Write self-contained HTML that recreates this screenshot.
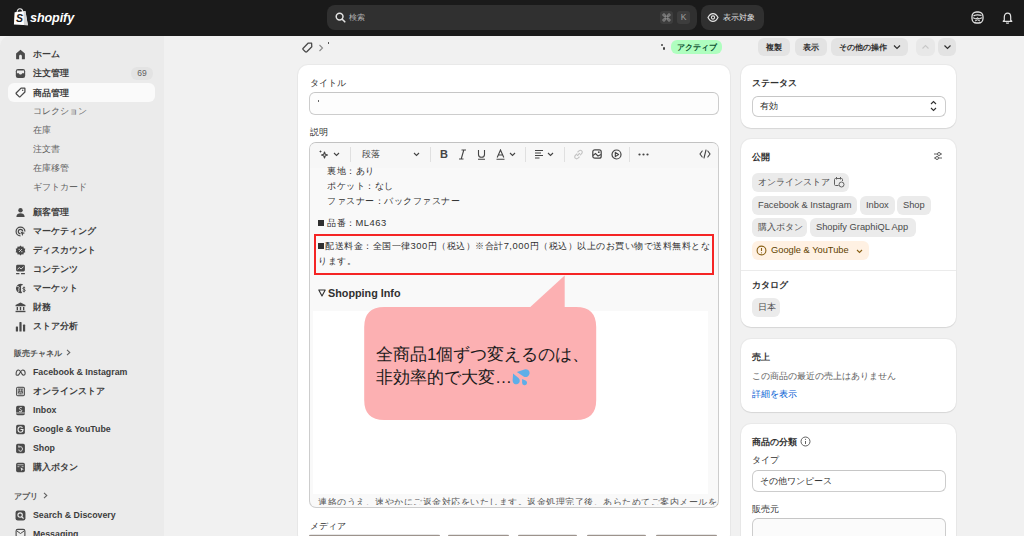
<!DOCTYPE html>
<html><head><meta charset="utf-8">
<style>
*{box-sizing:border-box;margin:0;padding:0}
html,body{width:1024px;height:536px;overflow:hidden;background:#f1f1f1;font-family:"Liberation Sans",sans-serif;color:#303030}
.abs{position:absolute}
#top{position:absolute;left:0;top:0;width:1024px;height:36px;background:#1a1a1a}
#side{position:absolute;left:0;top:36px;width:164px;height:500px;background:#ebebeb;border-top-left-radius:10px}
.nav{position:absolute;left:33px;font-size:8.8px;font-weight:bold;color:#3d3d3d;white-space:nowrap;line-height:12px}
.sub{font-weight:normal;color:#616161}
.sec{position:absolute;left:14px;font-size:8.4px;font-weight:bold;color:#555;white-space:nowrap;line-height:12px}
.ico{position:absolute;left:15px;width:11px;height:11px}
.card{position:absolute;background:#fff;border-radius:10px;box-shadow:0 1px 1px rgba(0,0,0,.08),0 0 0 1px rgba(0,0,0,.03)}
.lbl{position:absolute;font-size:10px;white-space:nowrap;line-height:12px;color:#303030}
.b{font-weight:bold}
.inp{position:absolute;border:1.2px solid #cdcdcd;border-top-color:#c6c6c6;border-radius:6px;background:#fdfdfd}
.chip{position:absolute;height:19px;background:#ebebeb;border-radius:6px;font-size:9.3px;line-height:19px;color:#4a4a4a;padding:0 6px;white-space:nowrap}
.btn{position:absolute;height:18px;background:#e3e3e3;border-radius:6px;font-size:8.4px;font-weight:bold;line-height:18px;color:#303030;text-align:center;white-space:nowrap}
.et{position:absolute;font-size:9.4px;line-height:12px;color:#303030;white-space:nowrap;letter-spacing:.5px}
</style></head><body>
<div id="top">
<!-- logo -->
<svg class="abs" style="left:13px;top:8px" width="16" height="18" viewBox="0 0 16 18"><path d="M4 4.2 C4.3 2 5.5 .8 7 .8 C8.5 .8 9.6 2 9.9 3.8" stroke="#e8e8e8" stroke-width="1.1" fill="none"/><path d="M1.6 4.3 L12.4 3.1 L14.9 17.2 L0.9 16.6 Z" fill="#fff"/><path d="M10.6 3.3 L12.4 3.1 L14.9 17.2 L10.9 17.1 Z" fill="#d4d4d4"/><text x="3" y="14" font-family="Liberation Sans" font-weight="bold" font-style="italic" font-size="10.5" fill="#1a1a1a">S</text></svg>
<div class="abs" style="left:30px;top:9px;font-size:12.6px;font-weight:bold;font-style:italic;color:#fff;letter-spacing:-.1px;line-height:18px">shopify</div>
<!-- search -->
<div class="abs" style="left:327px;top:5px;width:370px;height:25px;background:#303030;border-radius:8px"></div>
<svg class="abs" style="left:335px;top:12px" width="11" height="11" viewBox="0 0 11 11"><circle cx="4.6" cy="4.6" r="3.4" stroke="#e3e3e3" stroke-width="1.5" fill="none"/><path d="M7.2 7.2 L9.8 9.8" stroke="#e3e3e3" stroke-width="1.6" stroke-linecap="round"/></svg>
<div class="abs" style="left:349px;top:12px;font-size:8.4px;line-height:11px;color:#b5b5b5">検索</div>
<div class="abs" style="left:660px;top:11px;width:13px;height:13px;background:#3d3d3d;border-radius:3px;color:#a0a0a0;font-size:8px;line-height:13px;text-align:center"><svg width="9" height="9" viewBox="0 0 10 10" style="margin-top:2px"><path d="M3.5 3.5 H6.5 V6.5 H3.5 Z M3.5 3.5 V2.2 A1.3 1.3 0 1 0 2.2 3.5 H3.5 M6.5 3.5 V2.2 A1.3 1.3 0 1 1 7.8 3.5 H6.5 M6.5 6.5 V7.8 A1.3 1.3 0 1 0 7.8 6.5 H6.5 M3.5 6.5 V7.8 A1.3 1.3 0 1 1 2.2 6.5 H3.5" stroke="#a0a0a0" stroke-width=".9" fill="none"/></svg></div>
<div class="abs" style="left:677px;top:11px;width:13px;height:13px;background:#3d3d3d;border-radius:3px;color:#a0a0a0;font-size:8.5px;line-height:13px;text-align:center">K</div>
<div class="abs" style="left:701px;top:5px;width:63px;height:25px;background:#303030;border-radius:8px"></div>
<svg class="abs" style="left:707px;top:12px" width="12" height="11" viewBox="0 0 12 11"><path d="M1 5.5 C2.5 2.5 4 1.6 6 1.6 C8 1.6 9.5 2.5 11 5.5 C9.5 8.5 8 9.4 6 9.4 C4 9.4 2.5 8.5 1 5.5 Z" stroke="#e3e3e3" stroke-width="1.2" fill="none"/><circle cx="6" cy="5.5" r="1.6" stroke="#e3e3e3" stroke-width="1.1" fill="none"/></svg>
<div class="abs" style="left:723px;top:12px;font-size:8.4px;line-height:11px;color:#e3e3e3">表示対象</div>
<!-- right icons -->
<svg class="abs" style="left:971px;top:11px" width="13" height="13" viewBox="0 0 13 13"><rect x="1" y="1" width="11" height="11" rx="4.5" stroke="#e3e3e3" stroke-width="1.3" fill="none"/><path d="M2.5 5 C4 3.5 8 3.5 10.5 4.5" stroke="#e3e3e3" stroke-width="1.2" fill="none"/><path d="M2 6.8 L5 8 L6.5 7 L8 8 L11 6.8" stroke="#e3e3e3" stroke-width="1.1" fill="none"/><path d="M4 10 L6.5 8.8 L9 10" stroke="#e3e3e3" stroke-width="1" fill="none"/></svg>
<svg class="abs" style="left:1002px;top:12px" width="11" height="12" viewBox="0 0 11 12"><path d="M2.3 8.3 L2.3 5 C2.3 2.6 3.8 1.2 5.5 1.2 C7.2 1.2 8.7 2.6 8.7 5 L8.7 8.3 L9.8 9.3 L1.2 9.3 Z" stroke="#e3e3e3" stroke-width="1.2" fill="none" stroke-linejoin="round"/><path d="M4.3 10.6 C4.8 11.4 6.2 11.4 6.7 10.6" stroke="#e3e3e3" stroke-width="1.1" fill="none"/></svg>
</div>
<div id="side">
</div>
<!-- sidebar items (page coords) -->
<div class="abs" style="left:8px;top:83px;width:147px;height:19px;background:#fafafa;border-radius:6px"></div>

<svg class="abs" style="left:15px;top:48.5px" width="11" height="11" viewBox="0 0 20 20"><path d="M10 1.5 L18 8 V17.5 C18 18.1 17.6 18.5 17 18.5 H12.5 V13 C12.5 11.6 11.4 10.5 10 10.5 C8.6 10.5 7.5 11.6 7.5 13 V18.5 H3 C2.4 18.5 2 18.1 2 17.5 V8 Z" fill="#4a4a4a"/></svg>
<svg class="abs" style="left:15px;top:68.0px" width="11" height="11" viewBox="0 0 20 20"><rect x="1.5" y="2" width="17" height="16" rx="4" fill="#4a4a4a"/><path d="M3.5 4.5 H16.5 V9.5 H13 C12.5 11 11.4 12 10 12 C8.6 12 7.5 11 7 9.5 H3.5 Z" fill="#ebebeb"/></svg>
<svg class="abs" style="left:15px;top:87.0px" width="11" height="11" viewBox="0 0 20 20"><path d="M11 2 H17.5 C17.8 2 18 2.2 18 2.5 V9 L9.5 17.5 C8.9 18.1 8 18.1 7.4 17.5 L2.5 12.6 C1.9 12 1.9 11.1 2.5 10.5 Z" stroke="#4a4a4a" stroke-width="2.3" fill="none" stroke-linejoin="round"/><circle cx="14" cy="6" r="1.4" fill="#4a4a4a"/></svg>
<svg class="abs" style="left:15px;top:206.5px" width="11" height="11" viewBox="0 0 20 20"><circle cx="10" cy="6" r="4" fill="#4a4a4a"/><path d="M2.5 18 C2.5 13.5 6 11.5 10 11.5 C14 11.5 17.5 13.5 17.5 18 Z" fill="#4a4a4a"/></svg>
<svg class="abs" style="left:15px;top:225.5px" width="11" height="11" viewBox="0 0 20 20"><path d="M10 18 A8 8 0 1 1 18 10" stroke="#4a4a4a" stroke-width="2.2" fill="none"/><path d="M10 14 A4 4 0 1 1 14 10" stroke="#4a4a4a" stroke-width="2.2" fill="none"/><path d="M10 10 L18.5 12.5 L15 14 L13.5 18 Z" fill="#4a4a4a"/></svg>
<svg class="abs" style="left:15px;top:244.5px" width="11" height="11" viewBox="0 0 20 20"><path d="M10 1 L12.3 3 L15.3 2.8 L16 5.7 L18.8 7 L17.8 10 L18.8 13 L16 14.3 L15.3 17.2 L12.3 17 L10 19 L7.7 17 L4.7 17.2 L4 14.3 L1.2 13 L2.2 10 L1.2 7 L4 5.7 L4.7 2.8 L7.7 3 Z" fill="#4a4a4a"/><path d="M7.5 12.5 L12.5 7.5" stroke="#ebebeb" stroke-width="1.6"/><circle cx="7.5" cy="7.8" r="1.1" fill="#ebebeb"/><circle cx="12.5" cy="12.2" r="1.1" fill="#ebebeb"/></svg>
<svg class="abs" style="left:15px;top:263.5px" width="11" height="11" viewBox="0 0 20 20"><rect x="2" y="1.5" width="16" height="12" rx="2.5" fill="#4a4a4a"/><path d="M4.5 9.5 L8 6.5 L11 9 L15.5 5" stroke="#ebebeb" stroke-width="1.6" fill="none"/><path d="M2 17.5 H8 M11 17.5 H18" stroke="#4a4a4a" stroke-width="2"/></svg>
<svg class="abs" style="left:15px;top:282.5px" width="11" height="11" viewBox="0 0 20 20"><path d="M10 1.5 A8.5 8.5 0 1 0 12.5 18.2 L12.5 16 C11 16 11 13.5 11 12.5 L11 6.5 C11 5 12 4.5 13 4.3 L15 3.2 A8.5 8.5 0 0 0 10 1.5 Z" fill="#4a4a4a"/><path d="M3 6 C5 6.5 6.5 6 7.5 7.5 C8.5 9 6 10.5 7 13 C7.5 14.5 6.5 16 5.5 17" stroke="#ebebeb" stroke-width="1.6" fill="none"/><path d="M18.5 8.8 C17.5 7.8 14.2 7.8 14.2 9.8 C14.2 11.8 18.6 11.3 18.6 13.6 C18.6 15.6 15.5 15.8 14 14.6 M16.4 6.5 V17" stroke="#4a4a4a" stroke-width="1.7" fill="none"/></svg>
<svg class="abs" style="left:15px;top:301.5px" width="11" height="11" viewBox="0 0 20 20"><path d="M10 1 L19 5.5 V7.5 H1 V5.5 Z" fill="#4a4a4a"/><rect x="3" y="9" width="2.5" height="6" fill="#4a4a4a"/><rect x="8.75" y="9" width="2.5" height="6" fill="#4a4a4a"/><rect x="14.5" y="9" width="2.5" height="6" fill="#4a4a4a"/><rect x="1" y="16" width="18" height="2.5" fill="#4a4a4a"/></svg>
<svg class="abs" style="left:15px;top:320.5px" width="11" height="11" viewBox="0 0 20 20"><rect x="1.5" y="10" width="4" height="9" rx="1" fill="#4a4a4a"/><rect x="8" y="2" width="4" height="17" rx="1" fill="#4a4a4a"/><rect x="14.5" y="6.5" width="4" height="12.5" rx="1" fill="#4a4a4a"/></svg>
<svg class="abs" style="left:15px;top:366.5px" width="11" height="11" viewBox="0 0 20 20"><path d="M2 13 C2 9 4 5.5 6.5 5.5 C9 5.5 11 10 12.5 12.5 C13.8 14.5 15 15 16 15 C17.5 15 18.5 13.5 18.5 11.5 C18.5 8.5 16.8 5.5 14 5.5 C11 5.5 8.5 12 7 13.8 C6 15 5 15 4 15 C2.8 15 2 14.2 2 13 Z" stroke="#4a4a4a" stroke-width="2" fill="none"/></svg>
<svg class="abs" style="left:15px;top:385.5px" width="11" height="11" viewBox="0 0 20 20"><rect x="2" y="1.5" width="16" height="17" rx="3" fill="#4a4a4a"/><rect x="4.5" y="4" width="11" height="12" fill="none" stroke="#ebebeb" stroke-width="1.3"/><path d="M7 6 V10 M10 6 V10 M13 6 V10 M7 16 V12.5 H13 V16" stroke="#ebebeb" stroke-width="1.3" fill="none"/></svg>
<svg class="abs" style="left:15px;top:404.5px" width="11" height="11" viewBox="0 0 20 20"><rect x="2" y="1.5" width="16" height="17" rx="3" fill="#4a4a4a"/><path d="M12.5 5 C11.5 4.3 8 4 8 6.5 C8 8.8 12.5 8.5 12.5 10.5 C12.5 12.8 9 12.5 7.5 11.5" stroke="#ebebeb" stroke-width="1.7" fill="none"/><path d="M2 14.5 H18" stroke="#ebebeb" stroke-width="1.5"/></svg>
<svg class="abs" style="left:15px;top:423.5px" width="11" height="11" viewBox="0 0 20 20"><rect x="2" y="1.5" width="16" height="17" rx="3" fill="#4a4a4a"/><path d="M13.5 7 C12.8 5.8 11.5 5 10 5 C7.5 5 5.5 7.2 5.5 10 C5.5 12.8 7.5 15 10 15 C12.5 15 14.5 13 14.5 10 H10" stroke="#ebebeb" stroke-width="2" fill="none"/></svg>
<svg class="abs" style="left:15px;top:442.5px" width="11" height="11" viewBox="0 0 20 20"><rect x="2" y="1.5" width="16" height="17" rx="3" fill="#4a4a4a"/><path d="M7 4.5 V8 C7.5 7.2 8.5 6.8 10 6.8 C12.3 6.8 13.5 8.5 13.5 10.8 C13.5 13.2 12 15 10 15 C8.2 15 7 13.8 7 12" stroke="#ebebeb" stroke-width="1.8" fill="none"/></svg>
<svg class="abs" style="left:15px;top:461.5px" width="11" height="11" viewBox="0 0 20 20"><rect x="2" y="1.5" width="16" height="17" rx="3" fill="#4a4a4a"/><path d="M4.5 5 H15.5 M4.5 8.5 H8 M12 8.5 H15.5" stroke="#ebebeb" stroke-width="1.3"/><path d="M10 10 L16 13 L13 14 L12 17 Z" fill="#ebebeb"/></svg>
<svg class="abs" style="left:15px;top:509.5px" width="11" height="11" viewBox="0 0 20 20"><rect x="1" y="1" width="18" height="18" rx="4" fill="#4a4a4a"/><circle cx="9.3" cy="9.3" r="4" stroke="#ebebeb" stroke-width="2" fill="none"/><path d="M12.3 12.3 L15 15" stroke="#ebebeb" stroke-width="2" stroke-linecap="round"/></svg>
<svg class="abs" style="left:15px;top:528.0px" width="11" height="11" viewBox="0 0 20 20"><rect x="2" y="2.5" width="16" height="14" rx="3" stroke="#4a4a4a" stroke-width="2" fill="none"/><path d="M3.5 5.5 L10 10 L16.5 5.5" stroke="#4a4a4a" stroke-width="1.8" fill="none"/></svg>

<div class="abs" style="left:131px;top:67px;width:22px;height:13px;background:#e3e3e3;border-radius:6px;font-size:8.5px;line-height:13px;text-align:center;color:#616161">69</div>
<div class="nav" style="top:48px">ホーム</div>
<div class="nav" style="top:67px">注文管理</div>
<div class="nav" style="top:86.5px">商品管理</div>
<div class="nav sub" style="top:105px">コレクション</div>
<div class="nav sub" style="top:124px">在庫</div>
<div class="nav sub" style="top:143px">注文書</div>
<div class="nav sub" style="top:162px">在庫移管</div>
<div class="nav sub" style="top:181px">ギフトカード</div>
<div class="nav" style="top:206px">顧客管理</div>
<div class="nav" style="top:225px">マーケティング</div>
<div class="nav" style="top:244px">ディスカウント</div>
<div class="nav" style="top:263px">コンテンツ</div>
<div class="nav" style="top:282px">マーケット</div>
<div class="nav" style="top:301px">財務</div>
<div class="nav" style="top:320px">ストア分析</div>
<div class="nav" style="top:366px">Facebook &amp; Instagram</div>
<div class="nav" style="top:384.5px">オンラインストア</div>
<div class="nav" style="top:403.5px">Inbox</div>
<div class="nav" style="top:422.5px">Google &amp; YouTube</div>
<div class="nav" style="top:441.5px">Shop</div>
<div class="nav" style="top:460.5px">購入ボタン</div>
<div class="nav" style="top:509px">Search &amp; Discovery</div>
<div class="nav" style="top:528px">Messaging</div>
<div class="sec" style="top:346.5px">販売チャネル</div><svg class="abs" style="left:66px;top:349px" width="5" height="7" viewBox="0 0 5 7"><path d="M1 .8 L3.8 3.5 L1 6.2" stroke="#616161" stroke-width="1.1" fill="none"/></svg>
<div class="sec" style="top:489.5px">アプリ</div><svg class="abs" style="left:42.5px;top:492px" width="5" height="7" viewBox="0 0 5 7"><path d="M1 .8 L3.8 3.5 L1 6.2" stroke="#616161" stroke-width="1.1" fill="none"/></svg>
<!-- MAIN -->
<svg class="abs" style="left:302px;top:42px" width="11" height="11" viewBox="0 0 11 11"><path d="M6 1.2 L9.6 1.2 L9.8 4.8 L4.8 9.8 C4.4 10.2 3.8 10.2 3.4 9.8 L1.2 7.6 C.8 7.2 .8 6.6 1.2 6.2 Z" stroke="#4a4a4a" stroke-width="1.3" fill="none" stroke-linejoin="round"/></svg>
<svg class="abs" style="left:318px;top:44px" width="6" height="8" viewBox="0 0 6 8"><path d="M1.5 1 L4.5 4 L1.5 7" stroke="#8a8a8a" stroke-width="1.1" fill="none"/></svg>
<div class="abs" style="left:328px;top:42px;width:1px;height:2px;background:#555"></div>
<div class="abs" style="left:661px;top:44px;width:2px;height:2px;background:#444;border-radius:1px"></div>
<div class="abs" style="left:663px;top:47px;width:2px;height:3px;background:#444;border-radius:1px"></div>
<div class="abs" style="left:671px;top:40px;width:51px;height:14px;background:#affebf;border-radius:6px;font-size:8.4px;font-weight:bold;line-height:14px;text-align:center;color:#0c5132">アクティブ</div>
<div class="btn" style="left:758px;top:38px;width:32px">複製</div>
<div class="btn" style="left:795px;top:38px;width:32px">表示</div>
<div class="btn" style="left:831px;top:38px;width:77px;text-align:left;padding-left:8px">その他の操作</div>
<svg class="abs" style="left:893px;top:44px" width="8" height="6" viewBox="0 0 8 6"><path d="M1 1.5 L4 4.5 L7 1.5" stroke="#303030" stroke-width="1.2" fill="none"/></svg>
<div class="btn" style="left:916px;top:38px;width:19px;background:#e8e8e8"></div>
<svg class="abs" style="left:921px;top:44px" width="9" height="6" viewBox="0 0 9 6"><path d="M1.5 4.5 L4.5 1.5 L7.5 4.5" stroke="#c8c8c8" stroke-width="1.1" fill="none"/></svg>
<div class="btn" style="left:938px;top:38px;width:18px"></div>
<svg class="abs" style="left:943px;top:44px" width="9" height="6" viewBox="0 0 9 6"><path d="M1.5 1.5 L4.5 4.5 L7.5 1.5" stroke="#303030" stroke-width="1.2" fill="none"/></svg>

<!-- main card -->
<div class="card" style="left:298px;top:65px;width:432px;height:480px"></div>
<div class="lbl" style="left:310px;top:77px;font-size:8.8px">タイトル</div>
<div class="inp" style="left:309px;top:92px;width:410px;height:23px"></div>
<div class="abs" style="left:318px;top:100px;width:1px;height:2px;background:#666"></div>
<div class="lbl" style="left:310px;top:126px;font-size:8.8px">説明</div>
<!-- editor -->
<div class="abs" style="left:309px;top:142px;width:410px;height:366px;border:1.2px solid #cdcdcd;border-top-color:#c2c2c2;border-radius:7px;background:#f9f9f9;overflow:hidden">
  <div class="abs" style="left:0;top:0;width:410px;height:25px;background:#f7f7f7"></div>
</div>
<!-- toolbar (page coords) -->
<svg class="abs" style="left:318px;top:149px" width="11" height="11" viewBox="0 0 11 11"><path d="M6.5 3 L7.3 5.2 L9.5 6 L7.3 6.8 L6.5 9 L5.7 6.8 L3.5 6 L5.7 5.2 Z" stroke="#444" stroke-width="1.1" fill="none" stroke-linejoin="round"/><path d="M2.5 1 L2.9 2.1 L4 2.5 L2.9 2.9 L2.5 4 L2.1 2.9 L1 2.5 L2.1 2.1 Z" fill="#444"/></svg>
<svg class="abs" style="left:333px;top:152px" width="7" height="5" viewBox="0 0 7 5"><path d="M1 1 L3.5 3.5 L6 1" stroke="#444" stroke-width="1.1" fill="none"/></svg>
<div class="abs" style="left:350px;top:147px;width:1px;height:15px;background:#e0e0e0"></div>
<div class="abs" style="left:362px;top:149px;font-size:8.5px;line-height:11px;color:#444">段落</div>
<svg class="abs" style="left:413px;top:152px" width="7" height="5" viewBox="0 0 7 5"><path d="M1 1 L3.5 3.5 L6 1" stroke="#444" stroke-width="1.1" fill="none"/></svg>
<div class="abs" style="left:430px;top:147px;width:1px;height:15px;background:#e0e0e0"></div>
<div class="abs" style="left:440px;top:148px;font-size:11px;font-weight:bold;line-height:13px;color:#444">B</div>
<svg class="abs" style="left:458px;top:149px" width="9" height="11" viewBox="0 0 9 11"><path d="M3.5 1 H8 M1 10 H5.5 M5.8 1 L3.2 10" stroke="#444" stroke-width="1.1" fill="none"/></svg>
<svg class="abs" style="left:477px;top:149px" width="9" height="11" viewBox="0 0 9 11"><path d="M1.5 1 V5.5 C1.5 7.3 2.8 8.3 4.5 8.3 C6.2 8.3 7.5 7.3 7.5 5.5 V1 M1 10.3 H8" stroke="#444" stroke-width="1.1" fill="none"/></svg>
<svg class="abs" style="left:496px;top:149px" width="9" height="11" viewBox="0 0 9 11"><path d="M1.2 8.5 L4.5 1 L7.8 8.5 M2.4 6 H6.6 M0.5 10.3 H8.5" stroke="#444" stroke-width="1.1" fill="none"/></svg>
<svg class="abs" style="left:508.5px;top:152px" width="7" height="5" viewBox="0 0 7 5"><path d="M1 1 L3.5 3.5 L6 1" stroke="#444" stroke-width="1.1" fill="none"/></svg>
<div class="abs" style="left:525px;top:147px;width:1px;height:15px;background:#e0e0e0"></div>
<svg class="abs" style="left:534px;top:149px" width="10" height="10" viewBox="0 0 10 10"><path d="M1 1.5 H9 M1 4 H7 M1 6.5 H9 M1 9 H5.5" stroke="#444" stroke-width="1"/></svg>
<svg class="abs" style="left:547px;top:152px" width="7" height="5" viewBox="0 0 7 5"><path d="M1 1 L3.5 3.5 L6 1" stroke="#444" stroke-width="1.1" fill="none"/></svg>
<div class="abs" style="left:564px;top:147px;width:1px;height:15px;background:#e0e0e0"></div>
<svg class="abs" style="left:573px;top:149px" width="11" height="11" viewBox="0 0 11 11"><path d="M4.5 6.5 L6.5 4.5 M3.8 5 L2.3 6.5 C1.5 7.3 1.5 8.5 2.3 9.2 C3 9.9 4.2 9.9 5 9.2 L6.2 8 M4.8 3 L6 1.8 C6.8 1 8 1 8.7 1.8 C9.5 2.5 9.5 3.7 8.7 4.5 L7.5 5.8" stroke="#c4c4c4" stroke-width="1.1" fill="none" stroke-linecap="round"/></svg>
<svg class="abs" style="left:592px;top:149px" width="10" height="10" viewBox="0 0 10 10"><rect x=".8" y=".8" width="8.4" height="8.4" rx="2" stroke="#444" stroke-width="1.2" fill="none"/><path d="M1 6.5 L3.5 4.5 L6 7 L9 5.5" stroke="#444" stroke-width="1.1" fill="none"/><circle cx="6.8" cy="3.2" r=".9" fill="#444"/></svg>
<svg class="abs" style="left:611px;top:149px" width="11" height="11" viewBox="0 0 11 11"><circle cx="5.5" cy="5.5" r="4.5" stroke="#444" stroke-width="1.2" fill="none"/><path d="M4.3 3.4 L7.6 5.5 L4.3 7.6 Z" stroke="#444" stroke-width="1.1" fill="none" stroke-linejoin="round"/></svg>
<div class="abs" style="left:629px;top:147px;width:1px;height:15px;background:#e0e0e0"></div>
<svg class="abs" style="left:638px;top:153px" width="11" height="3" viewBox="0 0 11 3"><circle cx="1.5" cy="1.5" r="1.1" fill="#444"/><circle cx="5.5" cy="1.5" r="1.1" fill="#444"/><circle cx="9.5" cy="1.5" r="1.1" fill="#444"/></svg>
<svg class="abs" style="left:699px;top:149px" width="12" height="10" viewBox="0 0 12 10"><path d="M3.2 2 L1 5 L3.2 8 M8.8 2 L11 5 L8.8 8 M7 1 L5 9" stroke="#444" stroke-width="1.1" fill="none" stroke-linecap="round"/></svg>
<!-- editor content -->
<div class="et" style="left:327px;top:164.5px">裏地：あり</div>
<div class="et" style="left:327px;top:180px">ポケット：なし</div>
<div class="et" style="left:327px;top:194.5px">ファスナー：バックファスナー</div>
<div class="et" style="left:318px;top:217px"><span style="display:inline-block;width:6px;height:6px;background:#303030;margin-right:3px;vertical-align:0"></span>品番：ML463</div>
<div class="abs" style="left:314px;top:234px;width:400px;height:41px;border:2px solid #f52525"></div>
<div class="et" style="left:318px;top:239.5px"><span style="display:inline-block;width:6px;height:6px;background:#303030;margin-right:1px;vertical-align:0"></span>配送料金：全国一律300円（税込）※合計7,000円（税込）以上のお買い物で送料無料とな</div>
<div class="et" style="left:318px;top:254.5px">ります。</div>
<svg class="abs" style="left:318px;top:289px" width="8" height="8" viewBox="0 0 8 8"><path d="M.8 1 H7.2 L4 7 Z" stroke="#303030" stroke-width="1.1" fill="none" stroke-linejoin="round"/></svg><div class="et" style="left:328px;top:286px;font-size:10.8px;font-weight:bold;line-height:14px;letter-spacing:0">Shopping Info</div>
<div class="abs" style="left:313px;top:311px;width:395px;height:183px;background:#fff"></div>
<div class="abs" style="left:310px;top:494px;width:408px;height:10.5px;overflow:hidden"><div class="et" style="left:8px;top:2px;font-size:9.4px;color:#555">連絡のうえ、速やかにご返金対応をいたします。返金処理完了後、あらためてご案内メールをお</div></div>
<!-- bubble -->
<svg class="abs" style="left:364px;top:275px" width="233" height="146" viewBox="0 0 232.6 146"><path d="M165 0.5 L165 32 L212 32 Q232 32 232 52 L232 125 Q232 145 212 145 L20 145 Q0 145 0 125 L0 52 Q0 32 20 32 L165 32 Z" fill="#fcb0b2"/><path d="M200.5 0.5 L200.5 33 L165 33 Z" fill="#fcb0b2"/></svg>
<div class="abs" style="left:376px;top:342.5px;font-size:17px;line-height:23px;color:#1a1a1a;white-space:nowrap">全商品1個ずつ変えるのは、<br>非効率的で大変…</div>
<svg class="abs" style="left:510px;top:368px" width="20" height="20" viewBox="0 0 20 20"><path d="M6.80 4.00 L14.45 1.41 A3.9 3.9 0 1 1 13.59 8.38 Z" fill="#5eaee8"/><path d="M3.10 5.40 L8.51 9.94 A3.6 3.6 0 1 1 2.61 12.45 Z" fill="#5eaee8"/><path d="M12.10 11.00 L15.53 12.38 A2.5 2.5 0 1 1 12.10 14.70 Z" fill="#5eaee8"/></svg>
<div class="lbl" style="left:310px;top:519.5px;font-size:8.8px">メディア</div>

<div class="abs" style="left:309px;top:534px;width:131px;height:2px;background:linear-gradient(#e6e6e6 0 50%,#9d938c 50%);border-radius:2px 2px 0 0"></div><div class="abs" style="left:448px;top:534px;width:61px;height:2px;background:linear-gradient(#e6e6e6 0 50%,#9d938c 50%);border-radius:2px 2px 0 0"></div><div class="abs" style="left:518px;top:534px;width:59px;height:2px;background:linear-gradient(#e6e6e6 0 50%,#9d938c 50%);border-radius:2px 2px 0 0"></div><div class="abs" style="left:587px;top:534px;width:59px;height:2px;background:linear-gradient(#e6e6e6 0 50%,#9d938c 50%);border-radius:2px 2px 0 0"></div><div class="abs" style="left:656px;top:534px;width:61px;height:2px;background:linear-gradient(#e6e6e6 0 50%,#9d938c 50%);border-radius:2px 2px 0 0"></div>
<!-- RIGHT COLUMN -->
<div class="card" style="left:741px;top:65px;width:215px;height:63px"></div>
<div class="lbl b" style="left:752px;top:77px;font-size:8.8px">ステータス</div>
<div class="inp" style="left:752px;top:96px;width:194px;height:21px;background:#fff"></div>
<div class="lbl" style="left:760px;top:100px;font-size:8.8px">有効</div>
<svg class="abs" style="left:930px;top:100px" width="7" height="12" viewBox="0 0 7 12"><path d="M1 4 L3.5 1.5 L6 4 M1 8 L3.5 10.5 L6 8" stroke="#303030" stroke-width="1.1" fill="none"/></svg>

<div class="card" style="left:741px;top:139px;width:215px;height:188px"></div>
<div class="lbl b" style="left:752px;top:151px;font-size:8.8px">公開</div>
<svg class="abs" style="left:933px;top:151px" width="10" height="10" viewBox="0 0 10 10"><path d="M1 3 H9 M1 7 H9" stroke="#616161" stroke-width="1"/><circle cx="6" cy="3" r="1.5" fill="#fff" stroke="#616161"/><circle cx="4" cy="7" r="1.5" fill="#fff" stroke="#616161"/></svg>
<div class="chip" style="left:752px;top:173px;width:97px">オンラインストア</div>
<svg class="abs" style="left:833px;top:176px" width="12" height="12" viewBox="0 0 12 12"><path d="M5.5 9.5 H2.5 C1.9 9.5 1.5 9.1 1.5 8.5 V3.5 C1.5 2.9 1.9 2.5 2.5 2.5 H8.5 C9.1 2.5 9.5 2.9 9.5 3.5 V5 M3.5 1 V3.5 M7.5 1 V3.5" stroke="#616161" stroke-width="1" fill="none"/><circle cx="8.5" cy="8.5" r="2.5" stroke="#616161" stroke-width="1" fill="#ebebeb"/></svg>
<div class="chip" style="left:752px;top:196px;width:105px">Facebook &amp; Instagram</div>
<div class="chip" style="left:860px;top:196px;width:35px">Inbox</div>
<div class="chip" style="left:897px;top:196px;width:34px">Shop</div>
<div class="chip" style="left:752px;top:218px;width:55px">購入ボタン</div>
<div class="chip" style="left:810px;top:218px;width:106px">Shopify GraphiQL App</div>
<div class="chip" style="left:752px;top:241px;width:117px;background:#fff1e3;color:#5e4200;padding-left:19px">Google &amp; YouTube</div>
<svg class="abs" style="left:756px;top:245px" width="11" height="11" viewBox="0 0 11 11"><circle cx="5.5" cy="5.5" r="4.4" stroke="#8a6116" stroke-width="1.1" fill="none"/><path d="M5.5 3 V6" stroke="#8a6116" stroke-width="1.1"/><circle cx="5.5" cy="7.8" r=".6" fill="#8a6116"/></svg>
<svg class="abs" style="left:856px;top:249px" width="7" height="5" viewBox="0 0 7 5"><path d="M1 1 L3.5 3.5 L6 1" stroke="#8a6116" stroke-width="1.1" fill="none"/></svg>
<div class="abs" style="left:741px;top:270px;width:215px;height:1px;background:#ebebeb"></div>
<div class="lbl b" style="left:752px;top:279px;font-size:8.8px">カタログ</div>
<div class="chip" style="left:752px;top:298px;width:28px">日本</div>

<div class="card" style="left:741px;top:339px;width:215px;height:73px"></div>
<div class="lbl b" style="left:752px;top:351px;font-size:8.8px">売上</div>
<div class="lbl" style="left:752px;top:369.5px;font-size:8.8px;color:#616161">この商品の最近の売上はありません</div>
<div class="lbl" style="left:752px;top:388px;font-size:8.8px;color:#005bd3">詳細を表示</div>

<div class="card" style="left:741px;top:424px;width:215px;height:130px"></div>
<div class="lbl b" style="left:752px;top:435.5px;font-size:8.8px">商品の分類</div>
<svg class="abs" style="left:800px;top:436px" width="11" height="11" viewBox="0 0 11 11"><circle cx="5.5" cy="5.5" r="4.5" stroke="#616161" stroke-width="1" fill="none"/><path d="M5.5 5 V8" stroke="#616161" stroke-width="1"/><circle cx="5.5" cy="3.3" r=".6" fill="#616161"/></svg>
<div class="lbl" style="left:752px;top:454px;font-size:8.8px">タイプ</div>
<div class="inp" style="left:752px;top:470px;width:194px;height:22px;background:#fff"></div>
<div class="lbl" style="left:760px;top:475px;font-size:8.8px">その他ワンピース</div>
<div class="lbl" style="left:752px;top:503px;font-size:8.8px">販売元</div>
<div class="inp" style="left:752px;top:518px;width:194px;height:30px;background:#fbfbfb"></div>
</body></html>
